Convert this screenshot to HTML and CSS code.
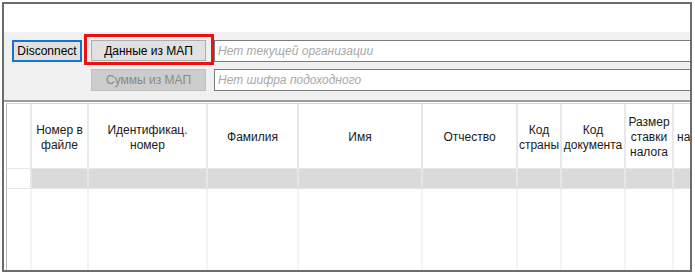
FILE: index.html
```html
<!DOCTYPE html>
<html lang="ru">
<head>
    <meta charset="UTF-8">
    <link rel="stylesheet" href="styles.css">
    <title>Импорт из МАП</title>
</head>
<body>
    <div class="window">
        <div class="blank"></div>

        <div class="toolbar">
            <button class="btn btn-default">Disconnect</button>
            <button class="btn btn-data">Данные из МАП</button>
            <div class="field"><span class="hint">Нет текущей организации</span></div>

            <div></div>
            <button class="btn btn-disabled">Суммы из МАП</button>
            <div class="field"><span class="hint">Нет шифра подоходного</span></div>
        </div>

        <div class="grid-wrap">
            <div class="grid">
                <div class="head"></div>
                <div class="head">Номер в<br>файле</div>
                <div class="head">Идентификац.<br>номер</div>
                <div class="head">Фамилия</div>
                <div class="head">Имя</div>
                <div class="head">Отчество</div>
                <div class="head">Код<br>страны</div>
                <div class="head">Код<br>документа</div>
                <div class="head">Размер<br>ставки<br>налога</div>
                <div class="head head-last">начислено</div>

                <div class="sel rowhead"></div>
                <div class="sel"></div>
                <div class="sel"></div>
                <div class="sel"></div>
                <div class="sel"></div>
                <div class="sel"></div>
                <div class="sel"></div>
                <div class="sel"></div>
                <div class="sel"></div>
                <div class="sel"></div>

                <div class="fill"></div>
                <div class="fill"></div>
                <div class="fill"></div>
                <div class="fill"></div>
                <div class="fill"></div>
                <div class="fill"></div>
                <div class="fill"></div>
                <div class="fill"></div>
                <div class="fill"></div>
                <div class="fill"></div>
            </div>
        </div>
    </div>
</body>
</html>
```
FILE: styles.css
```css
* {
    box-sizing: border-box;
}

body {
    margin: 0;
    background: #ffffff;
    font-family: "Liberation Sans", Arial, sans-serif;
    font-size: 12px;
    color: #000000;
    overflow: hidden;
    width: 695px;
    height: 275px;
}

.window {
    margin: 2px 0 0 2px;
    width: 690px;
    height: 270px;
    border: 2px solid #6c6c6c;
    display: flex;
    flex-direction: column;
    overflow: hidden;
}

.blank {
    height: 28px;
    flex: none;
}

.toolbar {
    height: 68px;
    flex: none;
    background: #f0f0f0;
    padding: 8px 0 0 8px;
    display: grid;
    grid-template-columns: 70px 115px 1fr;
    grid-template-rows: 22px 22px;
    column-gap: 9px;
    row-gap: 7px;
}

.btn {
    font-family: "Liberation Sans", Arial, sans-serif;
    font-size: 12px;
    color: #000000;
    background: #e1e1e1;
    border: 1px solid #adadad;
    padding: 0;
    height: 22px;
    line-height: 18px;
}

.btn-default {
    border: 2px solid #1574d2;
}

.btn-data {
    position: relative;
    height: 21px;
}

/* red highlight drawn over the button */
.btn-data::after {
    content: "";
    position: absolute;
    top: -7px;
    left: -8px;
    right: -9px;
    bottom: -5px;
    border: 3px solid #ee1111;
}

.btn-disabled {
    background: #cccccc;
    border-color: #bfbfbf;
    color: #8a8a8a;
}

.field {
    margin-left: -1px;
    background: #ffffff;
    border: 1px solid #7a7a7a;
    border-right: none;
    padding-left: 3px;
    display: flex;
    align-items: center;
}

.hint {
    font-style: italic;
    color: #a8a8a8;
}

.grid-wrap {
    flex: 1;
    border-top: 2px solid #9c9c9c;
    padding: 1px 0 0 2px;
    overflow: hidden;
}

.grid {
    height: 100%;
    border-top: 1px solid #d6d6d6;
    border-left: 1px solid #b8b8b8;
    display: grid;
    grid-template-columns: 25px 57px 119px 91px 124px 95px 44px 64px 48px 62px;
    grid-template-rows: 65px 20px 1fr;
}

.head {
    border-right: 2px solid #e8e8e8;
    border-bottom: 1px solid #e8e8e8;
    display: flex;
    align-items: center;
    justify-content: center;
    text-align: center;
    line-height: 15px;
    padding-top: 3px;
    color: #1a1a1a;
    white-space: nowrap;
    overflow: hidden;
}

.head-last {
    justify-content: flex-start;
    padding-left: 3px;
}

.sel {
    background: #dadada;
    border-right: 2px solid #e6e6e6;
    border-bottom: 1px solid #e6e6e6;
}

.sel.rowhead {
    background: #ffffff;
}

.fill {
    border-right: 2px solid #f3f3f3;
}
```
